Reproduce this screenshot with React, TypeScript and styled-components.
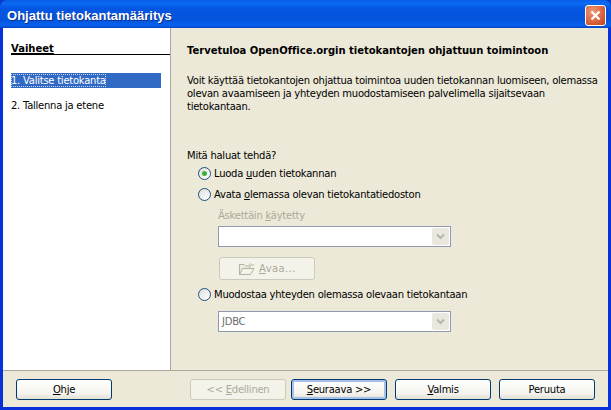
import styled, { createGlobalStyle } from 'styled-components';

const GlobalStyle = createGlobalStyle`
  html, body { margin: 0; padding: 0; background: #0a3ac4; }
  body { font-family: "DejaVu Sans", Verdana, sans-serif; font-size: 10px; letter-spacing: -0.25px; color: #000; }
`;

const Window = styled.div`
  width: 611px;
  height: 410px;
  display: flex;
  flex-direction: column;
  overflow: hidden;
  background: #0831d9;
  border-radius: 7px 7px 0 0;
`;

const TitleBar = styled.div`
  height: 28px;
  flex-shrink: 0;
  display: flex;
  align-items: center;
  justify-content: space-between;
  padding: 2px 5px 0 7px;
  box-sizing: border-box;
  background: linear-gradient(180deg, #0a5fe6 0%, #0a6af3 12%, #0556e2 30%, #0453dc 70%, #0661ee 90%, #0244c4 100%);
`;

const TitleText = styled.span`
  font-family: "Liberation Sans", Arial, sans-serif;
  font-size: 13px;
  font-weight: 700;
  letter-spacing: 0.03px;
  color: #fff;
  text-shadow: 1px 1px 0 #0f2f8a;
`;

const CloseButton = styled.div`
  width: 21px;
  height: 21px;
  box-sizing: border-box;
  display: flex;
  align-items: center;
  justify-content: center;
  border: 1px solid #fff;
  border-radius: 3px;
  background: radial-gradient(circle at 35% 30%, #eb9a7c 0%, #dc6a45 50%, #c1401f 100%);
`;

const Frame = styled.div`
  flex: 1;
  display: flex;
  flex-direction: column;
  margin: 0 3px 3px 3px;
  background: #ece9d8;
`;

const Body = styled.div`
  flex: 1;
  display: flex;
  border-bottom: 1px solid #aca899;
`;

const Sidebar = styled.div`
  width: 168px;
  flex-shrink: 0;
  box-sizing: border-box;
  background: #fff;
  border-right: 1px solid #aca899;
  padding: 16px 0 0 8px;
`;

const SidebarTitle = styled.div`
  font-weight: 700;
  letter-spacing: 0;
  height: 10px;
  line-height: 10px;
  border-bottom: 1px solid #000;
  text-decoration: underline;
`;

const Step = styled.div<{ $active?: boolean; $top: number }>`
  width: 150px;
  height: 15px;
  line-height: 15px;
  margin-top: ${p => p.$top}px;
  background: ${p => (p.$active ? '#316ac5' : 'transparent')};
  color: ${p => (p.$active ? '#fff' : '#000')};
`;

const FocusText = styled.span`
  display: inline-block;
  height: 13px;
  line-height: 13px;
  outline: 1px dotted #c8d4ee;
  outline-offset: -1px;
`;

const Content = styled.div`
  flex: 1;
  padding: 16px 0 0 16px;
`;

const Heading = styled.div`
  font-weight: 700;
  letter-spacing: -0.02px;
  line-height: 13px;
`;

const Intro = styled.p`
  margin: 17px 0 0;
  width: 412px;
  line-height: 13px;
`;

const Question = styled.div`
  margin-top: 36px;
  line-height: 13px;
`;

const RadioRow = styled.label<{ $top: number }>`
  display: flex;
  align-items: center;
  gap: 3px;
  height: 13px;
  line-height: 13px;
  margin: ${p => p.$top}px 0 0 11px;
`;

const Radio = styled.span<{ $checked?: boolean }>`
  width: 13px;
  height: 13px;
  box-sizing: border-box;
  flex-shrink: 0;
  display: flex;
  align-items: center;
  justify-content: center;
  border: 1px solid #1c5180;
  border-radius: 50%;
  background: linear-gradient(135deg, #dcdcd7 0%, #fff 90%);
  &::after {
    content: '';
    display: ${p => (p.$checked ? 'block' : 'none')};
    width: 5px;
    height: 5px;
    border-radius: 50%;
    background: #3fae3c;
  }
`;

const Indented = styled.div`
  margin-left: 31px;
`;

const FieldLabel = styled.div`
  margin-top: 8px;
  line-height: 13px;
  color: #aca899;
`;

const Combo = styled.div<{ $top: number }>`
  width: 233px;
  height: 21px;
  box-sizing: border-box;
  margin-top: ${p => p.$top}px;
  display: flex;
  align-items: center;
  justify-content: space-between;
  padding: 0 1px 0 3px;
  background: #fff;
  border: 1px solid #8f9ab0;
  color: #6d6d6d;
`;

const ComboArrow = styled.span`
  width: 17px;
  height: 17px;
  display: flex;
  align-items: center;
  justify-content: center;
  background: #e9e7de;
  border-radius: 2px;
`;

const OpenButton = styled.div`
  width: 96px;
  height: 23px;
  box-sizing: border-box;
  margin: 10px 0 0 1px;
  display: flex;
  align-items: center;
  justify-content: flex-start;
  gap: 3px;
  padding-left: 18px;
  letter-spacing: 0.4px;
  color: #aca899;
  background: #f4f3ea;
  border: 1px solid #cdcab9;
  border-radius: 3px;
`;

const Footer = styled.div`
  height: 36px;
  flex-shrink: 0;
  box-sizing: border-box;
  display: flex;
  padding: 8px 12px 0 13px;
`;

const Button = styled.div<{ $disabled?: boolean; $primary?: boolean; $left?: number }>`
  width: 96px;
  height: 21px;
  box-sizing: border-box;
  margin-left: ${p => p.$left ?? 0}px;
  display: flex;
  align-items: center;
  justify-content: center;
  border-radius: 3px;
  border: 1px solid ${p => (p.$disabled ? '#cdcab9' : '#003c74')};
  color: ${p => (p.$disabled ? '#aca899' : '#000')};
  background: ${p =>
    p.$disabled ? '#f4f3ea' : 'linear-gradient(180deg, #fff 0%, #f5f4ee 70%, #e3e0d3 100%)'};
  box-shadow: ${p => (p.$primary ? 'inset 0 0 0 2px #a6c0ea' : 'none')};
`;

const Key = styled.span`
  text-decoration: underline;
`;

function Arrow() {
  return (
    <svg width="9" height="7" viewBox="0 0 9 7">
      <path d="M1 1.5 L4.5 5 L8 1.5" fill="none" stroke="#b9b7aa" strokeWidth="2" />
    </svg>
  );
}

function FolderIcon() {
  return (
    <svg width="18" height="15" viewBox="0 0 18 15">
      <path d="M1.5 13.5 V3.5 H6 L7.5 5 H12 V13.5 Z" fill="#eeecdf" stroke="#b5b2a2" />
      <path d="M1.5 13.5 L4.5 7.5 H16 L12.5 13.5 Z" fill="#f4f3ea" stroke="#b5b2a2" />
      <path d="M10 4 L13 1.5 V3 H16 V5 H13 V6.5 Z" fill="#d6d3c4" />
    </svg>
  );
}

export default function App() {
  return (
    <Window>
      <GlobalStyle />
      <TitleBar>
        <TitleText>Ohjattu tietokantamääritys</TitleText>
        <CloseButton>
          <svg width="11" height="11" viewBox="0 0 11 11">
            <path d="M1.5 1.5 L9.5 9.5 M9.5 1.5 L1.5 9.5" stroke="#fff" strokeWidth="2.2" />
          </svg>
        </CloseButton>
      </TitleBar>
      <Frame>
        <Body>
          <Sidebar>
            <SidebarTitle>Vaiheet</SidebarTitle>
            <Step $active $top={18}><FocusText>1. Valitse tietokanta</FocusText></Step>
            <Step $top={10}>2. Tallenna ja etene</Step>
          </Sidebar>
          <Content>
            <Heading>Tervetuloa OpenOffice.orgin tietokantojen ohjattuun toimintoon</Heading>
            <Intro>
              Voit käyttää tietokantojen ohjattua toimintoa uuden tietokannan luomiseen, olemassa
              olevan avaamiseen ja yhteyden muodostamiseen palvelimella sijaitsevaan tietokantaan.
            </Intro>
            <Question>Mitä haluat tehdä?</Question>
            <RadioRow $top={5}>
              <Radio $checked />
              <span>Luoda <Key>u</Key>uden tietokannan</span>
            </RadioRow>
            <RadioRow $top={8}>
              <Radio />
              <span>Avata <Key>o</Key>lemassa olevan tietokantatiedoston</span>
            </RadioRow>
            <Indented>
              <FieldLabel>Äskettäin <Key>k</Key>äytetty</FieldLabel>
              <Combo $top={4}>
                <span />
                <ComboArrow><Arrow /></ComboArrow>
              </Combo>
              <OpenButton>
                <FolderIcon />
                <span><Key>A</Key>vaa...</span>
              </OpenButton>
            </Indented>
            <RadioRow $top={8}>
              <Radio />
              <span>Muodostaa yhteyden olemassa olevaan tietokantaan</span>
            </RadioRow>
            <Indented>
              <Combo $top={10}>
                <span>JDBC</span>
                <ComboArrow><Arrow /></ComboArrow>
              </Combo>
            </Indented>
          </Content>
        </Body>
        <Footer>
          <Button><span><Key>O</Key>hje</span></Button>
          <Button $disabled $left={78}><span>&lt;&lt; <Key>E</Key>dellinen</span></Button>
          <Button $primary $left={5}><span><Key>S</Key>euraava &gt;&gt;</span></Button>
          <Button $left={8}><span><Key>V</Key>almis</span></Button>
          <Button $left={8}>Peruuta</Button>
        </Footer>
      </Frame>
    </Window>
  );
}
